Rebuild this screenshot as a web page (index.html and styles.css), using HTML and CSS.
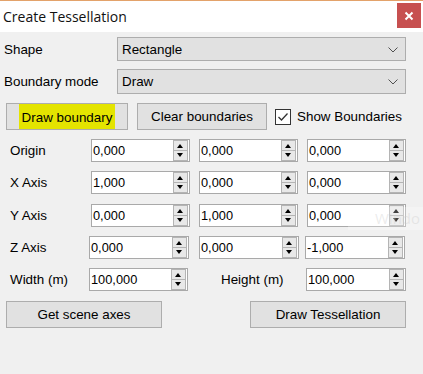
FILE: index.html
```html
<!DOCTYPE html>
<html>
<head>
<meta charset="utf-8">
<link rel="stylesheet" href="styles.css">
</head>
<body>
<div class="window">
  <div class="titlebar">
    <span class="title">Create Tessellation</span>
    <div class="close"><svg width="10" height="10" viewBox="0 0 10 10"><path d="M1.5 1.5 L8.5 8.5 M8.5 1.5 L1.5 8.5" stroke="#fff" stroke-width="2"/></svg></div>
  </div>
  <div class="content">
    <div class="row r-shape">
      <span class="lbl">Shape</span>
      <div class="combo"><span>Rectangle</span><svg class="chev" width="10" height="6" viewBox="0 0 10 6"><path d="M0.5 0.5 L5 5 L9.5 0.5" fill="none" stroke="#505050" stroke-width="1"/></svg></div>
    </div>
    <div class="row r-mode">
      <span class="lbl">Boundary mode</span>
      <div class="combo"><span>Draw</span><svg class="chev" width="10" height="6" viewBox="0 0 10 6"><path d="M0.5 0.5 L5 5 L9.5 0.5" fill="none" stroke="#505050" stroke-width="1"/></svg></div>
    </div>
    <div class="row r-btns">
      <div class="btn b-draw"><span class="hl">Draw boundary</span></div>
      <div class="btn b-clear">Clear boundaries</div>
      <div class="chk"><svg width="16" height="16" viewBox="0 0 16 16"><rect x="0.5" y="0.5" width="15" height="15" fill="#fff" stroke="#333"/><path d="M3.5 8 L6.5 11 L12.5 4.5" fill="none" stroke="#333" stroke-width="1.3"/></svg></div>
      <span class="chk-text">Show Boundaries</span>
    </div>

    <div class="row vec r-origin">
      <span class="vlbl">Origin</span>
      <div class="spin"><span class="val">0,000</span><div class="arrows"><div class="up"></div><div class="dn"></div></div></div>
      <div class="spin c2"><span class="val">0,000</span><div class="arrows"><div class="up"></div><div class="dn"></div></div></div>
      <div class="spin c3"><span class="val">0,000</span><div class="arrows"><div class="up"></div><div class="dn"></div></div></div>
    </div>
    <div class="row vec r-x">
      <span class="vlbl">X Axis</span>
      <div class="spin"><span class="val">1,000</span><div class="arrows"><div class="up"></div><div class="dn"></div></div></div>
      <div class="spin c2"><span class="val">0,000</span><div class="arrows"><div class="up"></div><div class="dn"></div></div></div>
      <div class="spin c3"><span class="val">0,000</span><div class="arrows"><div class="up"></div><div class="dn"></div></div></div>
    </div>
    <div class="row vec r-y">
      <span class="vlbl">Y Axis</span>
      <div class="spin"><span class="val">0,000</span><div class="arrows"><div class="up"></div><div class="dn"></div></div></div>
      <div class="spin c2"><span class="val">1,000</span><div class="arrows"><div class="up"></div><div class="dn"></div></div></div>
      <div class="spin c3"><span class="val">0,000</span><div class="arrows"><div class="up"></div><div class="dn"></div></div></div>
    </div>
    <div class="row vec r-z">
      <span class="vlbl">Z Axis</span>
      <div class="spin"><span class="val">0,000</span><div class="arrows"><div class="up"></div><div class="dn"></div></div></div>
      <div class="spin c2"><span class="val">0,000</span><div class="arrows"><div class="up"></div><div class="dn"></div></div></div>
      <div class="spin c3"><span class="val">-1,000</span><div class="arrows"><div class="up"></div><div class="dn"></div></div></div>
    </div>
    <div class="row vec r-w">
      <span class="vlbl">Width (m)</span>
      <div class="spin"><span class="val">100,000</span><div class="arrows"><div class="up"></div><div class="dn"></div></div></div>
      <span class="hlbl">Height (m)</span>
      <div class="spin"><span class="val">100,000</span><div class="arrows"><div class="up"></div><div class="dn"></div></div></div>
    </div>

    <div class="row r-bottom">
      <div class="btn b-wide">Get scene axes</div>
      <div class="btn b-wide">Draw Tessellation</div>
    </div>
  </div>
  <div class="watermark">Windo</div>
</div>
</body>
</html>
```

FILE: styles.css
```css
* { box-sizing: border-box; }
html, body {
  margin: 0;
  padding: 0;
  width: 423px;
  height: 374px;
  overflow: hidden;
  background: #f0f0f0;
}
.window {
  position: relative;
  width: 423px;
  height: 374px;
  background: #f0f0f0;
  font-family: "Liberation Sans", Arial, sans-serif;
  font-size: 13.4px;
  color: #000;
}
.titlebar {
  height: 32px;
  background: #fff;
  border-top: 1px solid #e3a26a;
  display: flex;
  align-items: flex-start;
  justify-content: space-between;
}
.title {
  font-family: "Open Sans", "Noto Sans", sans-serif;
  font-size: 14px;
  color: #111;
  margin-left: 3px;
  margin-top: 6px;
}
.close {
  width: 24px;
  height: 25px;
  margin-top: 2px;
  margin-right: 2px;
  background: #c75050;
  display: flex;
  align-items: center;
  justify-content: center;
}
.content {
  display: flex;
  flex-direction: column;
}
.row {
  display: flex;
  align-items: center;
}
.lbl {
  width: 117px;
  padding-left: 4px;
}
.r-shape { margin-top: 5px; height: 24px; }
.r-mode { margin-top: 8px; height: 25px; }
.combo {
  width: 289px;
  height: 100%;
  background: #e1e1e1;
  border: 1px solid #adadad;
  display: flex;
  align-items: center;
  justify-content: space-between;
  padding-left: 4px;
  padding-right: 7px;
}
.chev { margin-top: 1px; }

.r-btns { margin-top: 9px; height: 27px; }
.btn {
  background: #e1e1e1;
  border: 1px solid #adadad;
  height: 100%;
  display: flex;
  align-items: center;
  justify-content: center;
}
.b-draw { margin-left: 6px; width: 122px; }
.hl {
  background: #e4e400;
  padding: 6px 3px 4px 3px;
  margin-top: 0px;
}
.b-clear { margin-left: 9px; width: 130px; }
.chk { margin-left: 8px; width: 16px; height: 16px; display: flex; }
.chk-text { margin-left: 6px; }

.vec { height: 23px; }
.r-origin { margin-top: 9px; }
.r-x { margin-top: 9px; }
.r-y { margin-top: 10px; }
.r-z { margin-top: 9px; }
.r-w { margin-top: 9px; }
.vlbl { width: 91px; padding-left: 10px; }
.r-z .vlbl, .r-w .vlbl { width: 89px; }
.spin {
  width: 99px;
  height: 23px;
  background: #fff;
  border: 1px solid #a9a9a9;
  display: flex;
  align-items: center;
  justify-content: space-between;
  padding-left: 1px;
  padding-right: 1px;
}
.r-z .spin { width: 100px; }
.val { font-size: 12.8px; }
.c2 { margin-left: 9px; }
.r-z .c2 { margin-left: 10px; }
.r-z .c3 { margin-left: 6px; }
.c3 { margin-left: 9px; }
.hlbl { margin-left: 33px; width: 85px; }
.r-w .hlbl + .spin { width: 100px; }
.arrows {
  width: 15px;
  height: 21px;
  display: flex;
  flex-direction: column;
}
.up, .dn {
  flex: 1;
  background: #e8e8e8;
  border: 1px solid #b4b4b4;
  position: relative;
}
.dn { border-top: none; }
.up::after, .dn::after {
  content: "";
  position: absolute;
  left: 3px;
  width: 0;
  height: 0;
  border-left: 3.5px solid transparent;
  border-right: 3.5px solid transparent;
}
.up::after { top: 3px; border-bottom: 4px solid #000; }
.dn::after { top: 2px; border-top: 4px solid #000; }

.r-bottom {
  margin-top: 10px;
  height: 27px;
  justify-content: space-between;
  padding-left: 6px;
  padding-right: 17px;
}
.b-wide { width: 156px; }

.watermark {
  position: absolute;
  left: 348px;
  right: 0;
  top: 207px;
  height: 23px;
  background: rgba(255,255,255,0.25);
  color: rgba(200,200,200,0.35);
  font-family: "Open Sans", sans-serif;
  font-size: 15px;
  line-height: 23px;
  padding-left: 27px;
  white-space: nowrap;
  pointer-events: none;
}
```
